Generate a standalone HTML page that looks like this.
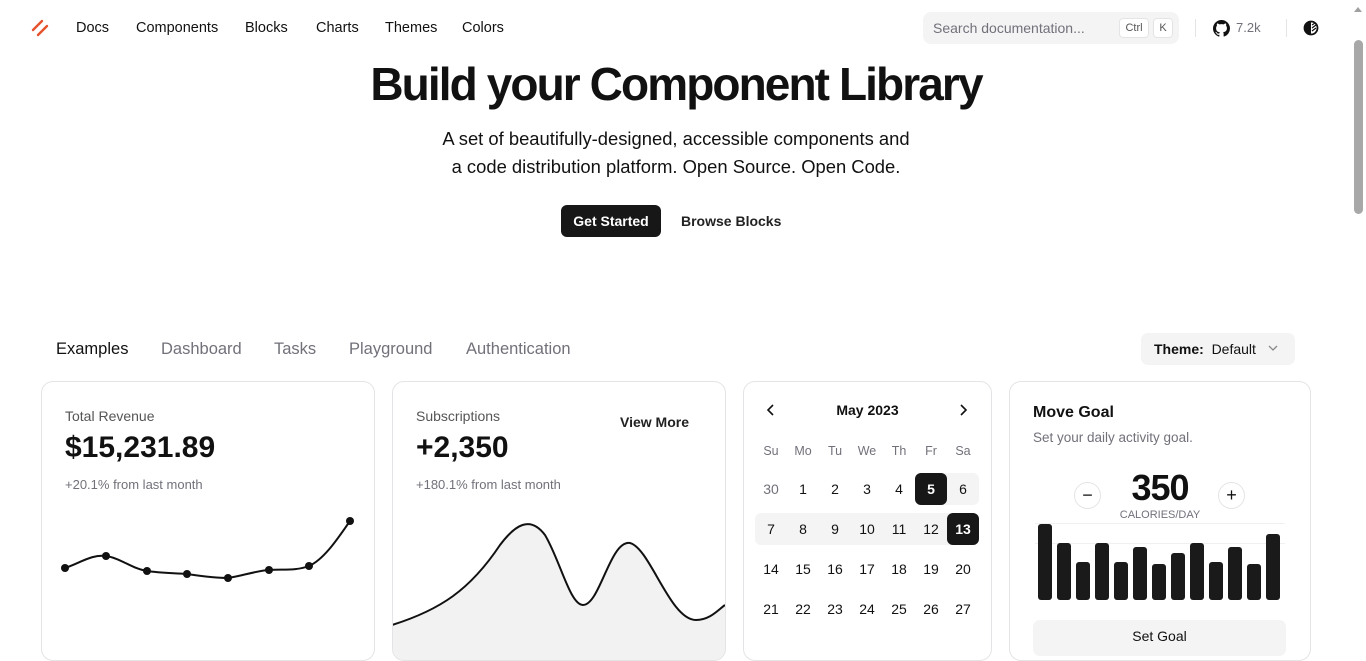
<!DOCTYPE html>
<html><head><meta charset="utf-8"><style>
*{box-sizing:border-box;margin:0;padding:0}
body{width:1366px;height:641px;overflow:hidden;background:#fff;font-family:"Liberation Sans",sans-serif;color:#111;position:relative}
.a{position:absolute;white-space:nowrap}
.nav{font-size:14.5px;top:20px;color:#111}
.card{position:absolute;border:1px solid #e4e4e7;border-radius:12px;background:#fff}
.muted{color:#71717a}
.cal{position:absolute;width:32px;height:32px;line-height:32px;text-align:center;font-size:14px}
.dh{font-size:12.5px;color:#71717a}
.bar{position:absolute;width:14px;bottom:41px;background:#1a1a1a;border-radius:3px}
.tab{font-size:16.5px;top:340px}
</style></head><body>
<svg class="a" style="left:30px;top:18px" width="20" height="20" viewBox="0 0 20 20"><path d="M3 12 L12 3 M8 17 L17 8" stroke="#e5532d" stroke-width="2.4" stroke-linecap="round"/></svg>
<div class="a nav" style="left:76px">Docs</div>
<div class="a nav" style="left:136px">Components</div>
<div class="a nav" style="left:245px">Blocks</div>
<div class="a nav" style="left:316px">Charts</div>
<div class="a nav" style="left:385px">Themes</div>
<div class="a nav" style="left:462px">Colors</div>
<div class="a" style="left:923px;top:12px;width:256px;height:32px;background:#f4f4f5;border-radius:8px"></div>
<div class="a muted" style="left:933px;top:20px;font-size:14px">Search documentation...</div>
<div class="a" style="left:1119px;top:18px;width:30px;height:20px;border:1px solid #e4e4e7;background:#fff;border-radius:4px;font-size:11px;text-align:center;line-height:18px;color:#555">Ctrl</div>
<div class="a" style="left:1153px;top:18px;width:20px;height:20px;border:1px solid #e4e4e7;background:#fff;border-radius:4px;font-size:11px;text-align:center;line-height:18px;color:#555">K</div>
<div class="a" style="left:1195px;top:19px;width:1px;height:18px;background:#e4e4e7"></div>
<svg class="a" style="left:1213px;top:20px" width="17" height="17" viewBox="0 0 16 16"><path fill="#111" d="M8 0C3.58 0 0 3.580 0 8c0 3.54 2.29 6.530 5.47 7.590.4.07.55-.17.55-.38v-1.33c-2.23.48-2.7-1.070-2.7-1.070-.36-.92-.89-1.17-.89-1.17-.73-.5.06-.49.06-.49.8.06 1.23.83 1.23.83.71 1.22 1.87.87 2.33.66.07-.52.28-.87.51-1.07-1.78-.2-3.64-.89-3.64-3.95 0-.87.31-1.59.82-2.15-.08-.2-.36-1.02.08-2.12 0 0 .67-.21 2.2.82A7.600 7.600 0 0 1 8 3.85c.68 0 1.36.09 2 .27 1.53-1.04 2.2-.82 2.2-.82.44 1.1.16 1.92.08 2.12.51.56.82 1.27.82 2.15 0 3.07-1.87 3.75-3.65 3.95.29.25.54.73.54 1.48v2.2c0 .21.15.46.55.38A8 8 0 0 0 16 8c0-4.42-3.58-8-8-8z"/></svg>
<div class="a muted" style="left:1236px;top:20px;font-size:13px">7.2k</div>
<div class="a" style="left:1286px;top:19px;width:1px;height:18px;background:#e4e4e7"></div>
<svg class="a" style="left:1303px;top:20px" width="16" height="16" viewBox="0 0 16 16"><circle cx="8" cy="8" r="6.5" fill="none" stroke="#111" stroke-width="1.8"/><path d="M8 1.5 A6.5 6.5 0 0 0 8 14.5Z" fill="#111"/><path d="M9 5l3-2M9 8l4-3M9 11l4-3" stroke="#111" stroke-width="1.2"/></svg>
<div class="a" style="left:1352px;top:0;width:14px;height:641px;background:#fff"></div>
<div class="a" style="left:1354px;top:40px;width:9px;height:174px;background:#a8a8a8;border-radius:5px"></div>
<div class="a" style="left:1354px;top:7px;width:0;height:0;border-left:4px solid transparent;border-right:4px solid transparent;border-bottom:5px solid #a0a0a0"></div>
<div class="a" style="left:0;width:1352px;top:57px;text-align:center;font-size:46px;font-weight:bold;letter-spacing:-1.9px">Build your Component Library</div>
<div class="a" style="left:0;width:1352px;top:125px;text-align:center;font-size:18.4px;line-height:28px">A set of beautifully-designed, accessible components and<br>a code distribution platform. Open Source. Open Code.</div>
<div class="a" style="left:561px;top:205px;width:100px;height:32px;background:#171717;color:#fff;border-radius:6px;font-size:14px;font-weight:bold;text-align:center;line-height:32px">Get Started</div>
<div class="a" style="left:681px;top:213px;font-size:14px;font-weight:bold;color:#222">Browse Blocks</div>
<div class="a tab" style="left:56px">Examples</div>
<div class="a muted tab" style="left:161px">Dashboard</div>
<div class="a muted tab" style="left:274px">Tasks</div>
<div class="a muted tab" style="left:349px">Playground</div>
<div class="a muted tab" style="left:466px">Authentication</div>
<div class="a" style="left:1141px;top:333px;width:154px;height:32px;background:#f4f4f5;border-radius:7px"></div>
<div class="a" style="left:1154px;top:341px;font-size:14px"><b>Theme:</b>&nbsp; Default</div>
<svg class="a" style="left:1268px;top:344px" width="10" height="8"><path d="M1 2l4 4 4-4" stroke="#888" fill="none" stroke-width="1.3"/></svg>
<div class="card" style="left:41px;top:381px;width:334px;height:280px"></div>
<div class="a muted" style="left:65px;top:408px;font-size:14px;color:#555">Total Revenue</div>
<div class="a" style="left:65px;top:431px;font-size:30px;font-weight:bold">$15,231.89</div>
<div class="a muted" style="left:65px;top:477px;font-size:13px">+20.1% from last month</div>
<svg class="a" style="left:0;top:0" width="380" height="641"><path d="M65 568 C80 563 92 554 106 556 C120 558 133 569 147 571 C160 573 174 573 187 574 C201 576 214 578 228 578 C242 576 255 571 269 570 C283 569 296 571 309 566 C325 559 340 535 350 521" fill="none" stroke="#111" stroke-width="2"/><g fill="#111"><circle cx="65" cy="568" r="4"/><circle cx="106" cy="556" r="4"/><circle cx="147" cy="571" r="4"/><circle cx="187" cy="574" r="4"/><circle cx="228" cy="578" r="4"/><circle cx="269" cy="570" r="4"/><circle cx="309" cy="566" r="4"/><circle cx="350" cy="521" r="4"/></g></svg>
<div class="card" style="left:392px;top:381px;width:334px;height:280px;overflow:hidden">
<svg style="position:absolute;left:-393px;top:-382px" width="740" height="660"><path d="M392 625 C440 610 470 590 500 545 C515 525 530 515 545 535 C560 560 570 605 583 605 C600 605 610 540 630 543 C650 548 670 620 696 620 C710 620 718 610 725 605 L725 660 L392 660Z" fill="#f2f2f2" stroke="none"/><path d="M392 625 C440 610 470 590 500 545 C515 525 530 515 545 535 C560 560 570 605 583 605 C600 605 610 540 630 543 C650 548 670 620 696 620 C710 620 718 610 725 605" fill="none" stroke="#111" stroke-width="2"/></svg></div>
<div class="a muted" style="left:416px;top:408px;font-size:14px;color:#555">Subscriptions</div>
<div class="a" style="left:416px;top:431px;font-size:30px;font-weight:bold">+2,350</div>
<div class="a muted" style="left:416px;top:477px;font-size:13px">+180.1% from last month</div>
<div class="a" style="left:620px;top:414px;font-size:14px;font-weight:bold;color:#222">View More</div>
<div class="card" style="left:743px;top:381px;width:249px;height:280px"></div>
<svg class="a" style="left:766px;top:404px" width="10" height="12"><path d="M7 1L2 6l5 5" stroke="#111" fill="none" stroke-width="1.6"/></svg>
<svg class="a" style="left:958px;top:404px" width="10" height="12"><path d="M3 1l5 5-5 5" stroke="#111" fill="none" stroke-width="1.6"/></svg>
<div class="a" style="left:743px;width:249px;top:402px;text-align:center;font-size:14px;font-weight:bold">May 2023</div>
<div class="a" style="left:915px;top:473px;width:64px;height:32px;background:#f4f4f5;border-radius:6px"></div>
<div class="a" style="left:755px;top:513px;width:224px;height:32px;background:#f4f4f5;border-radius:6px"></div>
<div class="a" style="left:915px;top:473px;width:32px;height:32px;background:#171717;border-radius:6px"></div>
<div class="a" style="left:947px;top:513px;width:32px;height:32px;background:#171717;border-radius:6px"></div>
<div class="cal dh" style="left:755px;top:435px">Su</div><div class="cal dh" style="left:787px;top:435px">Mo</div><div class="cal dh" style="left:819px;top:435px">Tu</div><div class="cal dh" style="left:851px;top:435px">We</div><div class="cal dh" style="left:883px;top:435px">Th</div><div class="cal dh" style="left:915px;top:435px">Fr</div><div class="cal dh" style="left:947px;top:435px">Sa</div>
<div class="cal muted" style="left:755px;top:473px">30</div><div class="cal" style="left:787px;top:473px">1</div><div class="cal" style="left:819px;top:473px">2</div><div class="cal" style="left:851px;top:473px">3</div><div class="cal" style="left:883px;top:473px">4</div><div class="cal" style="left:915px;top:473px;color:#fff;font-weight:bold">5</div><div class="cal" style="left:947px;top:473px">6</div>
<div class="cal" style="left:755px;top:513px">7</div><div class="cal" style="left:787px;top:513px">8</div><div class="cal" style="left:819px;top:513px">9</div><div class="cal" style="left:851px;top:513px">10</div><div class="cal" style="left:883px;top:513px">11</div><div class="cal" style="left:915px;top:513px">12</div><div class="cal" style="left:947px;top:513px;color:#fff;font-weight:bold">13</div>
<div class="cal" style="left:755px;top:553px">14</div><div class="cal" style="left:787px;top:553px">15</div><div class="cal" style="left:819px;top:553px">16</div><div class="cal" style="left:851px;top:553px">17</div><div class="cal" style="left:883px;top:553px">18</div><div class="cal" style="left:915px;top:553px">19</div><div class="cal" style="left:947px;top:553px">20</div>
<div class="cal" style="left:755px;top:593px">21</div><div class="cal" style="left:787px;top:593px">22</div><div class="cal" style="left:819px;top:593px">23</div><div class="cal" style="left:851px;top:593px">24</div><div class="cal" style="left:883px;top:593px">25</div><div class="cal" style="left:915px;top:593px">26</div><div class="cal" style="left:947px;top:593px">27</div>
<div class="card" style="left:1009px;top:381px;width:302px;height:280px"></div>
<div class="a" style="left:1033px;top:404px;font-size:16px;font-weight:bold">Move Goal</div>
<div class="a muted" style="left:1033px;top:430px;font-size:13.5px">Set your daily activity goal.</div>
<div class="a" style="left:1074px;top:482px;width:27px;height:27px;border:1px solid #e4e4e7;border-radius:50%;text-align:center;line-height:24px;font-size:18px">−</div>
<div class="a" style="left:1218px;top:482px;width:27px;height:27px;border:1px solid #e4e4e7;border-radius:50%;text-align:center;line-height:25px;font-size:18px">+</div>
<div class="a" style="left:1110px;width:100px;top:467px;text-align:center;font-size:36px;font-weight:bold;letter-spacing:-1px">350</div>
<div class="a muted" style="left:1100px;width:120px;top:509px;text-align:center;font-size:11px">CALORIES/DAY</div>
<div class="a" style="left:1035px;top:523px;width:250px;height:1px;background:#f0f0f0"></div>
<div class="a" style="left:1035px;top:543px;width:250px;height:1px;background:#f0f0f0"></div>
<div class="bar" style="left:1038px;height:76px"></div><div class="bar" style="left:1057px;height:57px"></div><div class="bar" style="left:1076px;height:38px"></div><div class="bar" style="left:1095px;height:57px"></div><div class="bar" style="left:1114px;height:38px"></div><div class="bar" style="left:1133px;height:53px"></div><div class="bar" style="left:1152px;height:36px"></div><div class="bar" style="left:1171px;height:47px"></div><div class="bar" style="left:1190px;height:57px"></div><div class="bar" style="left:1209px;height:38px"></div><div class="bar" style="left:1228px;height:53px"></div><div class="bar" style="left:1247px;height:36px"></div><div class="bar" style="left:1266px;height:66px"></div>
<div class="a" style="left:1033px;top:620px;width:253px;height:36px;background:#f4f4f5;border-radius:7px;text-align:center;font-size:14px;line-height:32px">Set Goal</div>
</body></html>
